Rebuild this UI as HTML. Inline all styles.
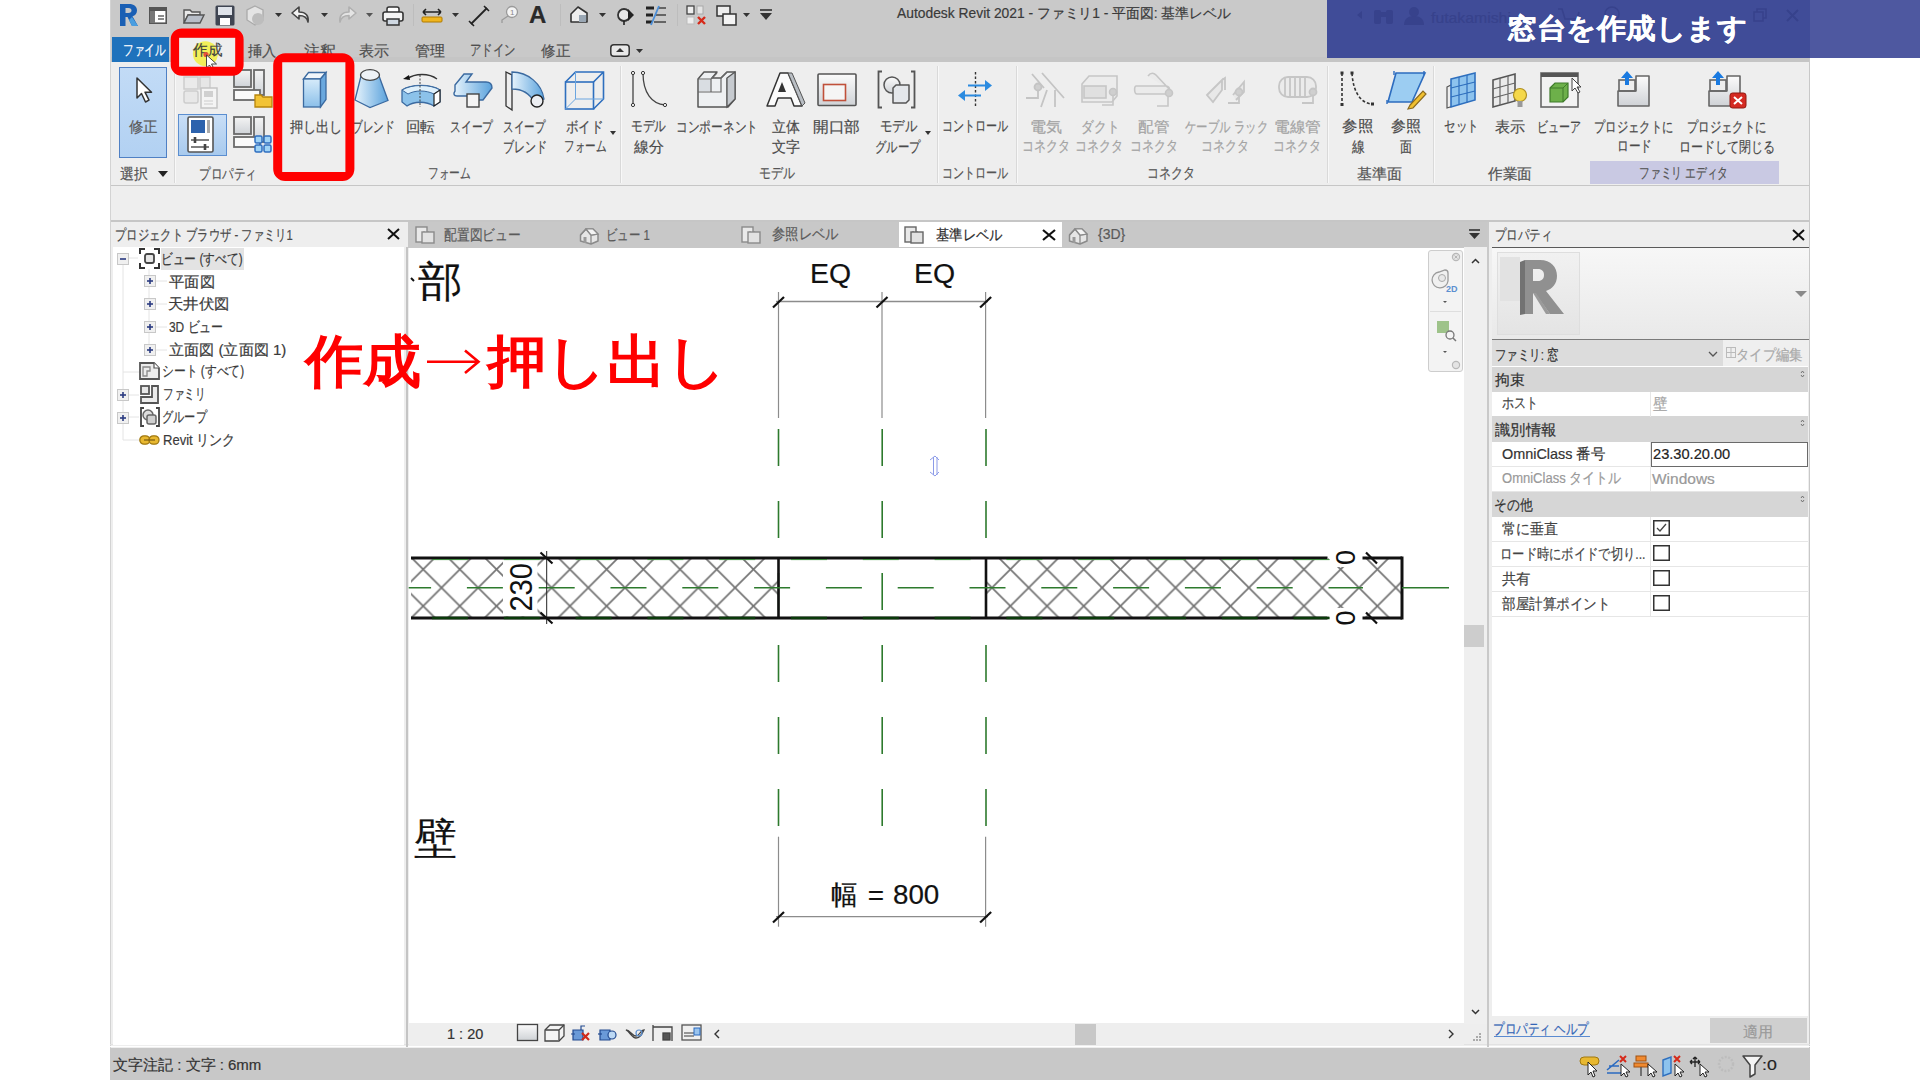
<!DOCTYPE html>
<html><head><meta charset="utf-8">
<style>
*{box-sizing:border-box;margin:0;padding:0}
html,body{width:1920px;height:1080px;overflow:hidden;background:#fff;font-family:"Liberation Sans",sans-serif;color:#333}
.a{position:absolute;white-space:nowrap;-webkit-text-stroke:0.2px currentColor}
.bg{position:absolute}
svg{position:absolute;overflow:visible}
</style></head><body>
<div class="bg" style="left:110px;top:0px;width:1700px;height:1080px;background:#eeeeee;"></div>
<div class="bg" style="left:110px;top:0px;width:1700px;height:62px;background:#c9c9c9;"></div>
<div class="bg" style="left:110px;top:57px;width:1700px;height:5px;background:#c5c5c5;"></div>
<div class="bg" style="left:110px;top:185px;width:1700px;height:1px;background:#c6c6c6;"></div>
<div class="bg" style="left:110px;top:220px;width:1700px;height:2px;background:#c6c6c6;"></div>
<div class="bg" style="left:110px;top:0px;width:1px;height:1080px;background:#d3d3d3;"></div>
<div class="bg" style="left:1809px;top:0px;width:1px;height:1080px;background:#c8c8c8;"></div>
<div class="bg" style="left:110px;top:1044px;width:1700px;height:1px;background:#e2e2e2;"></div>
<div class="bg" style="left:110px;top:1045.5px;width:1700px;height:1.5px;background:#ffffff;"></div>
<div class="bg" style="left:110px;top:1047.5px;width:1700px;height:32.5px;background:#c8c8c8;"></div>
<svg style="left:119px;top:3px" width="20" height="24" viewBox="0 0 20 24"><path d="M1 1h9c5 0 8 2.5 8 6.5 0 3-1.8 5-4.5 5.8L19 23h-6l-4.5-9H6.5v9H1z M6.5 5v5h3c2 0 3-1 3-2.5S11.5 5 9.5 5z" fill="#1a5fb4" fill-rule="evenodd"/><path d="M13 14l6 9h-6l-3-6z" fill="#4a9ee0"/></svg>
<svg style="left:149px;top:7px" width="18" height="17" viewBox="0 0 18 17"><rect x="0.8" y="0.8" width="16.4" height="15.4" fill="#fff" stroke="#555" stroke-width="1.6"/><rect x="1" y="1" width="16" height="3" fill="#555"/><rect x="1" y="4" width="5" height="12" fill="#777"/><path d="M9 9h6M9 12h6" stroke="#666" stroke-width="1.4"/></svg>
<svg style="left:183px;top:8px" width="22" height="16" viewBox="0 0 22 16"><path d="M1 2h6l2 2h8v3H5L1 15z" fill="#e9e9e9" stroke="#555" stroke-width="1.4"/><path d="M1 15l4-8h16l-4 8z" fill="#b8bec8" stroke="#555" stroke-width="1.4"/></svg>
<svg style="left:215px;top:5px" width="20" height="21" viewBox="0 0 20 21"><rect x="0.5" y="0.5" width="19" height="20" rx="1.5" fill="#3f4552"/><rect x="3" y="2" width="14" height="8" fill="#dfe3ea"/><rect x="5" y="13" width="10" height="7" fill="#fff"/></svg>
<svg style="left:245px;top:5px" width="20" height="21" viewBox="0 0 20 21"><path d="M10 1l8 4v10l-8 5-8-5V5z" fill="#e4e4e4" stroke="#aaa" stroke-width="1.3"/><circle cx="13" cy="14" r="6" fill="#bdbdbd"/></svg>
<svg style="left:275px;top:13px" width="7" height="4" viewBox="0 0 7 4"><path d="M0 0h7L3.5 4z" fill="#333"/></svg>
<svg style="left:291px;top:6px" width="20" height="17" viewBox="0 0 20 17"><path d="M8 1L1 7l7 6V9.5c5 0 8 1.5 9 6.5 1-6-2-10-9-10z" fill="#f2f2f2" stroke="#444" stroke-width="1.6" stroke-linejoin="round"/></svg>
<svg style="left:321px;top:13px" width="7" height="4" viewBox="0 0 7 4"><path d="M0 0h7L3.5 4z" fill="#333"/></svg>
<svg style="left:337px;top:6px" width="20" height="17" viewBox="0 0 20 17"><path d="M12 1l7 6-7 6V9.5c-5 0-8 1.5-9 6.5-1-6 2-10 9-10z" fill="#e4e4e4" stroke="#b0b0b0" stroke-width="1.6" stroke-linejoin="round"/></svg>
<svg style="left:366px;top:13px" width="7" height="4" viewBox="0 0 7 4"><path d="M0 0h7L3.5 4z" fill="#555"/></svg>
<svg style="left:382px;top:6px" width="22" height="20" viewBox="0 0 22 20"><rect x="5" y="1" width="12" height="6" rx="2" fill="#fff" stroke="#333" stroke-width="1.5"/><rect x="1" y="6" width="20" height="9" rx="2" fill="#f4f4f4" stroke="#333" stroke-width="1.6"/><rect x="5" y="13" width="12" height="6" fill="#cfd8e2" stroke="#333" stroke-width="1.5"/></svg>
<div class="bg" style="left:413px;top:4px;width:1px;height:22px;background:#bdbdbd"></div>
<svg style="left:421px;top:8px" width="22" height="15" viewBox="0 0 22 15"><path d="M2 4h18M2 4l3-3M2 4l3 3M20 4l-3-3M20 4l-3 3" stroke="#222" stroke-width="1.6" fill="none"/><rect x="1" y="9" width="20" height="5" rx="1" fill="#f0b51e" stroke="#b07a00" stroke-width="1"/></svg>
<svg style="left:452px;top:13px" width="7" height="4" viewBox="0 0 7 4"><path d="M0 0h7L3.5 4z" fill="#333"/></svg>
<svg style="left:468px;top:5px" width="22" height="22" viewBox="0 0 22 22"><path d="M3 19L19 3" stroke="#222" stroke-width="1.8"/><path d="M1 16l5 5M16 1l5 5" stroke="#222" stroke-width="1.6"/></svg>
<svg style="left:499px;top:5px" width="20" height="20" viewBox="0 0 20 20"><circle cx="13" cy="7" r="5.5" fill="#f4f4f4" stroke="#9a9a9a" stroke-width="1.3"/><path d="M9 11l-6 4v3" stroke="#9a9a9a" stroke-width="1.3" fill="none"/><text x="11" y="10" font-size="8" fill="#888" font-family="Liberation Sans">1</text></svg>
<div class="a" style="left:529px;top:1px;font-size:24px;font-weight:bold;color:#2a2a2a;line-height:28px">A</div>
<div class="bg" style="left:560px;top:4px;width:1px;height:22px;background:#bdbdbd"></div>
<svg style="left:569px;top:6px" width="20" height="18" viewBox="0 0 20 18"><path d="M2 8L9 1l9 6v9H2z" fill="#eee" stroke="#333" stroke-width="1.6" stroke-linejoin="round"/><rect x="10" y="9" width="7" height="7" fill="#9aa7b4"/></svg>
<svg style="left:599px;top:13px" width="7" height="4" viewBox="0 0 7 4"><path d="M0 0h7L3.5 4z" fill="#333"/></svg>
<svg style="left:616px;top:5px" width="19" height="20" viewBox="0 0 19 20"><circle cx="8" cy="10" r="6" fill="#e8e8e8" stroke="#333" stroke-width="1.8"/><path d="M12 4l6 6-6 6z" fill="#222"/><path d="M8 16v4" stroke="#222" stroke-width="1.6"/></svg>
<svg style="left:645px;top:5px" width="22" height="20" viewBox="0 0 22 20"><path d="M1 3h8M1 10h7M1 17h6" stroke="#222" stroke-width="3"/><path d="M13 3h8M11 10h10M9 17h12" stroke="#444" stroke-width="1.3"/><path d="M14 1L6 20" stroke="#4a8ed8" stroke-width="1.8"/></svg>
<div class="bg" style="left:677px;top:4px;width:1px;height:22px;background:#bdbdbd"></div>
<svg style="left:686px;top:5px" width="22" height="21" viewBox="0 0 22 21"><rect x="1" y="1" width="7" height="8" fill="#eee" stroke="#444" stroke-width="1.3"/><rect x="11" y="1" width="6" height="8" fill="#e4e4e4" stroke="#aaa" stroke-width="1"/><rect x="1" y="12" width="7" height="7" fill="#eee" stroke="#bbb" stroke-width="1"/><path d="M12 12l7 7M19 12l-7 7" stroke="#d62a1a" stroke-width="2.4"/></svg>
<svg style="left:716px;top:5px" width="21" height="21" viewBox="0 0 21 21"><rect x="1" y="1" width="13" height="10" fill="#eee" stroke="#333" stroke-width="1.5"/><rect x="7" y="9" width="13" height="11" fill="#f4f4f4" stroke="#333" stroke-width="1.5"/></svg>
<svg style="left:743px;top:13px" width="7" height="4" viewBox="0 0 7 4"><path d="M0 0h7L3.5 4z" fill="#333"/></svg>
<svg style="left:759px;top:9px" width="14" height="12" viewBox="0 0 14 12"><path d="M1 1h12" stroke="#333" stroke-width="1.6"/><path d="M1 4h12l-6 7z" fill="#333"/></svg>

<div class="a" style="left:897.0px;top:4.5px;font-size:14px;line-height:17px;color:#3a3a3a;font-weight:normal;transform:scaleX(0.9882);transform-origin:0 0;">Autodesk Revit 2021 - ファミリ1 - 平面図: 基準レベル</div>
<div class="bg" style="left:112px;top:37px;width:57px;height:25px;background:#1f72bc;"></div>
<div class="a" style="left:122.8px;top:40.5px;font-size:15px;line-height:18px;color:#ffffff;font-weight:normal;transform:scaleX(0.7119);transform-origin:0 0;">ファイル</div>
<div class="bg" style="left:178px;top:38px;width:60px;height:24px;background:#eeeeee;"></div>
<svg style="left:0;top:0" width="400" height="80" viewBox="0 0 400 80"><circle cx="205.4" cy="53.7" r="12.5" fill="#f2ee40" fill-opacity="0.85"/></svg>
<div class="a" style="left:193.0px;top:41.0px;font-size:15px;line-height:18px;color:#3f3f3f;font-weight:normal;transform:scaleX(0.9667);transform-origin:0 0;">作成</div>
<div class="a" style="left:248.3px;top:42.0px;font-size:15px;line-height:18px;color:#4f4f4f;font-weight:normal;transform:scaleX(0.9552);transform-origin:0 0;">挿入</div>
<div class="a" style="left:303.5px;top:42.0px;font-size:15px;line-height:18px;color:#4f4f4f;font-weight:normal;transform:scaleX(1.0517);transform-origin:0 0;">注釈</div>
<div class="a" style="left:359.0px;top:41.5px;font-size:15px;line-height:18px;color:#4f4f4f;font-weight:normal;">表示</div>
<div class="a" style="left:415.0px;top:41.5px;font-size:15px;line-height:18px;color:#4f4f4f;font-weight:normal;">管理</div>
<div class="a" style="left:470.2px;top:41.0px;font-size:15px;line-height:18px;color:#4f4f4f;font-weight:normal;transform:scaleX(0.7586);transform-origin:0 0;">アドイン</div>
<div class="a" style="left:541.0px;top:41.5px;font-size:15px;line-height:18px;color:#4f4f4f;font-weight:normal;transform:scaleX(0.9667);transform-origin:0 0;">修正</div>
<svg style="left:610px;top:44px" width="20" height="13" viewBox="0 0 20 13"><rect x="0.8" y="0.8" width="18.4" height="11.4" rx="3" fill="#e8e8e8" stroke="#333" stroke-width="1.5"/><path d="M6 8h8L10 4z" fill="#333"/></svg>
<svg style="left:636px;top:49px" width="7" height="4" viewBox="0 0 7 4"><path d="M0 0h7L3.5 4z" fill="#333"/></svg>
<div class="bg" style="left:174px;top:66px;width:1px;height:117px;background:#d9d9d9;"></div>
<div class="bg" style="left:175px;top:66px;width:1px;height:117px;background:#f8f8f8;"></div>
<div class="bg" style="left:620px;top:66px;width:1px;height:117px;background:#d9d9d9;"></div>
<div class="bg" style="left:621px;top:66px;width:1px;height:117px;background:#f8f8f8;"></div>
<div class="bg" style="left:937px;top:66px;width:1px;height:117px;background:#d9d9d9;"></div>
<div class="bg" style="left:938px;top:66px;width:1px;height:117px;background:#f8f8f8;"></div>
<div class="bg" style="left:1016px;top:66px;width:1px;height:117px;background:#d9d9d9;"></div>
<div class="bg" style="left:1017px;top:66px;width:1px;height:117px;background:#f8f8f8;"></div>
<div class="bg" style="left:1327px;top:66px;width:1px;height:117px;background:#d9d9d9;"></div>
<div class="bg" style="left:1328px;top:66px;width:1px;height:117px;background:#f8f8f8;"></div>
<div class="bg" style="left:1433px;top:66px;width:1px;height:117px;background:#d9d9d9;"></div>
<div class="bg" style="left:1434px;top:66px;width:1px;height:117px;background:#f8f8f8;"></div>
<div class="bg" style="left:118.5px;top:66.5px;width:48.5px;height:91.5px;background:linear-gradient(#c2dbf6,#b2d1f2);border:1.5px solid #4f80c4"></div>
<svg style="left:135px;top:77px" width="17" height="27" viewBox="0 0 17 27"><path d="M2 1v20l4.5-4.5 4 8.5 3.5-1.8-4-8h6.5z" fill="#fff" stroke="#333" stroke-width="1.5" stroke-linejoin="round"/></svg>
<div class="bg" style="left:178px;top:114px;width:49px;height:42px;background:linear-gradient(#c9def6,#a8caee);border:1px solid #5b8ed0"></div>
<svg style="left:187px;top:116px" width="27" height="37" viewBox="0 0 27 37"><rect x="1" y="1" width="25" height="35" rx="1.5" fill="#fff" stroke="#555" stroke-width="1.6"/><rect x="4" y="4" width="14" height="13" fill="#2c62ad"/><rect x="20" y="4" width="3" height="13" fill="#aaa"/><path d="M4 24h18M4 31h18" stroke="#555" stroke-width="1.6"/><path d="M8 21v6M18 28v6" stroke="#444" stroke-width="2.6"/></svg>
<svg style="left:183px;top:76px" width="38" height="33" viewBox="0 0 38 33"><rect x="1" y="1" width="14" height="12" fill="#eaeaea" stroke="#cdcdcd" stroke-width="1.5"/><rect x="17" y="1" width="10" height="12" fill="#e6e6e6" stroke="#cdcdcd" stroke-width="1.5"/><rect x="1" y="15" width="14" height="12" rx="2" fill="#e8e8e8" stroke="#cdcdcd" stroke-width="1.5"/><rect x="18" y="12" width="16" height="20" fill="#f4f4f4" stroke="#c4c4c4" stroke-width="1.5"/><rect x="21" y="15" width="9" height="6" fill="#d0d0d0"/><path d="M21 25h9M21 28h9" stroke="#ccc" stroke-width="1"/></svg>
<svg style="left:233px;top:69px" width="40" height="39" viewBox="0 0 40 39"><rect x="1" y="1" width="17" height="17" fill="url(#gg)" stroke="#6a6a6a" stroke-width="1.8"/><rect x="21" y="1" width="10" height="25" fill="url(#gg)" stroke="#6a6a6a" stroke-width="1.8"/><rect x="1" y="21" width="26" height="10" fill="#fafafa" stroke="#6a6a6a" stroke-width="1.8"/><path d="M22 26h6l2 2h9v10H22z" fill="#f2c335" stroke="#b8860b" stroke-width="1.3"/></svg>
<svg style="left:233px;top:116px" width="40" height="38" viewBox="0 0 40 38"><defs><linearGradient id="gg" x1="0" y1="0" x2="0" y2="1"><stop offset="0" stop-color="#f4f4f4"/><stop offset="1" stop-color="#cfd3d8"/></linearGradient></defs><rect x="1" y="1" width="17" height="17" fill="url(#gg)" stroke="#6a6a6a" stroke-width="1.8"/><rect x="21" y="1" width="10" height="25" fill="url(#gg)" stroke="#6a6a6a" stroke-width="1.8"/><rect x="1" y="21" width="26" height="10" fill="#fafafa" stroke="#6a6a6a" stroke-width="1.8"/><g fill="#9fd3f6" stroke="#2f6fc0" stroke-width="1.5"><rect x="22" y="20" width="7" height="7" rx="1.5"/><rect x="31" y="20" width="7" height="7" rx="1.5"/><rect x="22" y="29" width="7" height="7" rx="1.5"/><rect x="31" y="29" width="7" height="7" rx="1.5"/></g></svg>
<svg style="left:0;top:0" width="1920" height="200" viewBox="0 0 1920 200"><defs>
<linearGradient id="bl" x1="0" y1="0" x2="0" y2="1"><stop offset="0" stop-color="#d6ebfa"/><stop offset="1" stop-color="#8cc0ea"/></linearGradient>
<linearGradient id="bl2" x1="0" y1="0" x2="1" y2="0"><stop offset="0" stop-color="#e6f3fc"/><stop offset="1" stop-color="#5aa2dc"/></linearGradient>
<linearGradient id="gr" x1="0" y1="0" x2="0" y2="1"><stop offset="0" stop-color="#fbfbfb"/><stop offset="1" stop-color="#cfd2d6"/></linearGradient>
</defs><path d="M303.5 79l5-6.5h17.5l-5.5 6.5z" fill="#f2f6fa" stroke="#3b6aa0" stroke-width="1.3"/><rect x="303.5" y="79" width="17" height="28" fill="url(#bl)" stroke="#3b6aa0" stroke-width="1.3"/><path d="M320.5 79l5.5-6.5v27l-5.5 7.5z" fill="#6aa8de" stroke="#3b6aa0" stroke-width="1.3"/><path d="M361 76l-6 24 15 7.5 18-7L379 76z" fill="url(#bl2)" stroke="#3b6aa0" stroke-width="1.3"/><ellipse cx="370" cy="75" rx="9.5" ry="5.3" fill="#eef2f6" stroke="#444" stroke-width="1.3"/><path d="M407 79c8-6 22-6 30 0" fill="none" stroke="#333" stroke-width="1.3"/><path d="M403 79l6-4 1 5z" fill="#111"/><path d="M402 90c10-6 28-6 38 0v12l-6 4c-8-5-20-5-27 0l-5-4z" fill="#8cc2ea" stroke="#3b6aa0" stroke-width="1.3"/><path d="M402 90c10-6 28-6 38 0l-6 4c-8-4-19-4-26 0z" fill="#dff0fb" stroke="#3b6aa0" stroke-width="1"/><path d="M434 94l6-4v12l-6 4z" fill="#fff" stroke="#222" stroke-width="1.2"/><path d="M420 75v32" stroke="#333" stroke-width="0.9" stroke-dasharray="2 1.5"/><path d="M455 85l9-11h8l-6 8h20c5 0 6 3 6 6l-9 12h-10v-4h-16c-3 0-4-2-2-5z" fill="url(#bl2)" stroke="#3b6aa0" stroke-width="1.4"/><rect x="467" y="94" width="12" height="13" fill="#f4f4f4" stroke="#444" stroke-width="1.4"/><path d="M506 72l6 3v35l-6-4z" fill="#eee" stroke="#333" stroke-width="1.3"/><path d="M512 72c16 0 30 12 32 27l-10 3c-4-8-12-13-22-13z" fill="url(#bl2)" stroke="#3b6aa0" stroke-width="1.3"/><circle cx="537" cy="101" r="6" fill="#eceef2" stroke="#222" stroke-width="1.4"/><g fill="none" stroke="#2e6fbe" stroke-width="1.6"><rect x="565.5" y="82" width="28" height="27"/><path d="M565.5 82l10-10h28v27l-10 10M593.5 82l10-10"/></g><g fill="none" stroke="#6aa5e0" stroke-width="1"><path d="M575.5 72v27h28M575.5 99l-10 10"/></g><path d="M633 73v32" stroke="#444" stroke-width="1.3"/><circle cx="633" cy="73" r="1.6" fill="#fff" stroke="#333"/><circle cx="633" cy="105" r="1.6" fill="#fff" stroke="#333"/><path d="M643 73c0 20 9 31 22 32" fill="none" stroke="#444" stroke-width="1.3"/><circle cx="643" cy="73" r="1.6" fill="#fff" stroke="#333"/><circle cx="665" cy="105" r="1.6" fill="#fff" stroke="#333"/><path d="M698 79l6-7h13l-5 6h9l6-6h8v27l-7 8h-30z" fill="#eef0f2" stroke="#555" stroke-width="1.5" stroke-linejoin="round"/><path d="M698 79h13v13h-13M711 79l6-6M721 78v14h-23M721 78l6-6M727 78v29" fill="none" stroke="#666" stroke-width="1.2"/><path d="M727 78l8-6v27l-8 8z" fill="#c6cacf" stroke="#555" stroke-width="1.2"/><rect x="699" y="80" width="11" height="11" fill="#d9dde2"/><path d="M767 106l13-33h8l14 33h-8l-3-8h-13l-3 8z" fill="#fbfbfb" stroke="#333" stroke-width="1.5" stroke-linejoin="round"/><path d="M778 92h8l-4-10z" fill="#333"/><path d="M788 73l4 0 13 30-3 3z" fill="#b9bec4" stroke="#555" stroke-width="1"/><rect x="818" y="74" width="38" height="31.5" rx="1" fill="url(#gr)" stroke="#555" stroke-width="1.6"/><rect x="823.5" y="84.5" width="22" height="16" fill="#f5f5f5" stroke="#c0503a" stroke-width="1.6"/><path d="M882 71.5h-3.5v36h3.5M911 71.5h3.5v36H911" fill="none" stroke="#555" stroke-width="1.8"/><circle cx="892" cy="85" r="8" fill="url(#gr)" stroke="#555" stroke-width="1.5"/><path d="M893 88l3-3h13v15l-3 3h-13z" fill="#e4e7eb" stroke="#555" stroke-width="1.5" stroke-linejoin="round"/><path d="M975.5 72v36" stroke="#333" stroke-width="1.4" stroke-dasharray="2.5 2"/><path d="M968 85.5h19" stroke="#2b8be0" stroke-width="2"/><path d="M985 80l7 5.5-7 5.5z" fill="#2b8be0"/><path d="M963 95.5h18" stroke="#2b8be0" stroke-width="2"/><path d="M965 90l-7 5.5 7 5.5z" fill="#2b8be0"/><g fill="none" stroke="#c4c4c4" stroke-width="1.8"><path d="M1032 74l12 14M1042 73l22 25M1047 90l-6 17M1055 90v17"/><circle cx="1038" cy="87" r="3.5" fill="#cfcfcf"/><path d="M1038 91v7h-12"/></g><g fill="none" stroke="#c6c6c6" stroke-width="1.6"><path d="M1082 84l7-8h28v20l-5 6h-30z" fill="#ececec"/><rect x="1084" y="86" width="22" height="12" fill="#e0e0e0"/><circle cx="1113" cy="92" r="3.5" fill="#cfcfcf"/><path d="M1113 96v9h-11"/></g><g fill="none" stroke="#c6c6c6" stroke-width="1.6"><path d="M1148 76c3-4 6-3 8-1l14 15M1136 86h30c3 0 4 3 4 6v2h-33c-3 0-3-8-1-8z" fill="#ebebeb"/><circle cx="1169" cy="93" r="3.5" fill="#cfcfcf"/><path d="M1168 97v9h-11"/></g><g fill="none" stroke="#c6c6c6" stroke-width="1.8"><path d="M1207 95l15-15v10l-9 12zM1222 80l3-2v12M1233 95l11-13v10l-8 8" fill="#e8e8e8"/><circle cx="1239" cy="92" r="3.5" fill="#cfcfcf"/><path d="M1239 96v7h-11"/></g><g fill="none" stroke="#c6c6c6" stroke-width="1.8"><rect x="1279" y="77" width="37" height="20" rx="9" fill="#ebebeb"/><path d="M1285 78v18M1290 78v18M1295 78v18M1300 78v18M1305 78v18"/><circle cx="1313" cy="92" r="3.5" fill="#cfcfcf"/><path d="M1313 96v7h-11"/></g><path d="M1342 73v32" stroke="#333" stroke-width="1.6" stroke-dasharray="3 2"/><rect x="1340.5" y="71.5" width="3" height="3" fill="#333"/><rect x="1340.5" y="103" width="3" height="3" fill="#333"/><path d="M1352 73c1 18 8 30 20 31" fill="none" stroke="#333" stroke-width="1.6" stroke-dasharray="3 2"/><rect x="1350.5" y="71.5" width="3" height="3" fill="#333"/><rect x="1371" y="102.5" width="3" height="3" fill="#333"/><path d="M1396 73h29l-13 29h-24z" fill="#9ccdf2" stroke="#2c6cbf" stroke-width="1.6"/><path d="M1394 71v4M1424 71v4M1387 100v4" stroke="#2c6cbf" stroke-width="1.4"/><path d="M1410 105l13-14 3 3-13 14-5 1z" fill="#f0c030" stroke="#8a6a20" stroke-width="1.2"/><path d="M1447 87l6-3v22l-6 2z" fill="#eee" stroke="#555" stroke-width="1.2"/><path d="M1451 79l24-6v27l-24 7z" fill="#8dc3ee" stroke="#2e6fbe" stroke-width="1.6"/><path d="M1459 77v28M1467 75v28M1451 88l24-6M1451 97l24-6" stroke="#2e6fbe" stroke-width="1.2"/><path d="M1493 80l22-6v27l-22 6z" fill="#eaeaea" stroke="#555" stroke-width="1.6"/><path d="M1500 78v27M1508 76v27M1493 89l22-6M1493 98l22-6" stroke="#666" stroke-width="1.2"/><circle cx="1520" cy="95" r="6.5" fill="#f5d84a" stroke="#b09020" stroke-width="1.2"/><rect x="1517.5" y="101" width="5" height="6" fill="#999"/><rect x="1541" y="73" width="37" height="34" fill="#f2f2f2" stroke="#666" stroke-width="1.6"/><rect x="1541" y="73" width="37" height="4" fill="#555"/><path d="M1550 88l5-5h13v14l-5 5h-13z" fill="#6db04a" stroke="#3e7a2a" stroke-width="1.2"/><path d="M1550 88h13v14M1563 88l5-5" stroke="#3e7a2a" stroke-width="1" fill="none"/><path d="M1572 78v13l3-3 3 5 2-1-3-5h4z" fill="#fff" stroke="#444" stroke-width="1"/><path d="M1636 76h13v30h-31V91h18z" fill="url(#gr)" stroke="#666" stroke-width="1.6" stroke-linejoin="round"/><rect x="1619" y="80" width="16" height="11" fill="none" stroke="#666" stroke-width="1.6"/><path d="M1627 71l-6 7h4v7h4v-7h4z" fill="#1a7ae0"/><path d="M1727 76h13v30h-31V91h18z" fill="url(#gr)" stroke="#666" stroke-width="1.6" stroke-linejoin="round"/><rect x="1710" y="80" width="16" height="11" fill="none" stroke="#666" stroke-width="1.6"/><path d="M1718 71l-6 7h4v7h4v-7h4z" fill="#1a7ae0"/><rect x="1730" y="93" width="16" height="15" rx="2.5" fill="#d42a22" stroke="#901810" stroke-width="1"/><path d="M1734 97l8 7M1742 97l-8 7" stroke="#fff" stroke-width="2"/></svg>
<div class="a" style="left:128.8px;top:117.5px;font-size:15px;line-height:18px;color:#5a5a5a;font-weight:normal;transform:scaleX(0.9617);transform-origin:0 0;">修正</div>
<div class="a" style="left:289.7px;top:117.5px;font-size:15px;line-height:18px;color:#4a4a4a;font-weight:normal;transform:scaleX(0.8759);transform-origin:0 0;">押し出し</div>
<div class="a" style="left:351.8px;top:117.5px;font-size:15px;line-height:18px;color:#4a4a4a;font-weight:normal;transform:scaleX(0.7105);transform-origin:0 0;">ブレンド</div>
<div class="a" style="left:406.0px;top:117.5px;font-size:15px;line-height:18px;color:#4a4a4a;font-weight:normal;transform:scaleX(0.9655);transform-origin:0 0;">回転</div>
<div class="a" style="left:450.3px;top:118.0px;font-size:15px;line-height:18px;color:#4a4a4a;font-weight:normal;transform:scaleX(0.7167);transform-origin:0 0;">スイープ</div>
<div class="a" style="left:503.3px;top:118.0px;font-size:15px;line-height:18px;color:#4a4a4a;font-weight:normal;transform:scaleX(0.7000);transform-origin:0 0;">スイープ</div>
<div class="a" style="left:503.3px;top:137.5px;font-size:15px;line-height:18px;color:#4a4a4a;font-weight:normal;transform:scaleX(0.7368);transform-origin:0 0;">ブレンド</div>
<div class="a" style="left:566.2px;top:117.5px;font-size:15px;line-height:18px;color:#4a4a4a;font-weight:normal;transform:scaleX(0.8333);transform-origin:0 0;">ボイド</div>
<div class="a" style="left:564.3px;top:136.5px;font-size:15px;line-height:18px;color:#4a4a4a;font-weight:normal;transform:scaleX(0.7069);transform-origin:0 0;">フォーム</div>
<div class="a" style="left:630.9px;top:117.0px;font-size:15px;line-height:18px;color:#4a4a4a;font-weight:normal;transform:scaleX(0.7795);transform-origin:0 0;">モデル</div>
<div class="a" style="left:634.0px;top:137.5px;font-size:15px;line-height:18px;color:#4a4a4a;font-weight:normal;">線分</div>
<div class="a" style="left:675.9px;top:117.5px;font-size:15px;line-height:18px;color:#4a4a4a;font-weight:normal;transform:scaleX(0.7810);transform-origin:0 0;">コンポーネント</div>
<div class="a" style="left:772.0px;top:118.0px;font-size:15px;line-height:18px;color:#4a4a4a;font-weight:normal;transform:scaleX(0.9333);transform-origin:0 0;">立体</div>
<div class="a" style="left:772.0px;top:138.0px;font-size:15px;line-height:18px;color:#4a4a4a;font-weight:normal;transform:scaleX(0.9333);transform-origin:0 0;">文字</div>
<div class="a" style="left:813.0px;top:118.0px;font-size:15px;line-height:18px;color:#4a4a4a;font-weight:normal;transform:scaleX(1.0465);transform-origin:0 0;">開口部</div>
<div class="a" style="left:879.8px;top:117.0px;font-size:15px;line-height:18px;color:#4a4a4a;font-weight:normal;transform:scaleX(0.8273);transform-origin:0 0;">モデル</div>
<div class="a" style="left:874.5px;top:138.0px;font-size:15px;line-height:18px;color:#4a4a4a;font-weight:normal;transform:scaleX(0.7627);transform-origin:0 0;">グループ</div>
<div class="a" style="left:941.5px;top:117.0px;font-size:15px;line-height:18px;color:#4a4a4a;font-weight:normal;transform:scaleX(0.7386);transform-origin:0 0;">コントロール</div>
<div class="a" style="left:1029.9px;top:117.5px;font-size:15px;line-height:18px;color:#a3a3a3;font-weight:normal;transform:scaleX(1.0690);transform-origin:0 0;">電気</div>
<div class="a" style="left:1022.4px;top:137.0px;font-size:15px;line-height:18px;color:#a3a3a3;font-weight:normal;transform:scaleX(0.8036);transform-origin:0 0;">コネクタ</div>
<div class="a" style="left:1081.3px;top:117.5px;font-size:15px;line-height:18px;color:#a3a3a3;font-weight:normal;transform:scaleX(0.8500);transform-origin:0 0;">ダクト</div>
<div class="a" style="left:1075.4px;top:137.0px;font-size:15px;line-height:18px;color:#a3a3a3;font-weight:normal;transform:scaleX(0.8036);transform-origin:0 0;">コネクタ</div>
<div class="a" style="left:1138.0px;top:117.5px;font-size:15px;line-height:18px;color:#a3a3a3;font-weight:normal;transform:scaleX(1.0357);transform-origin:0 0;">配管</div>
<div class="a" style="left:1130.4px;top:137.0px;font-size:15px;line-height:18px;color:#a3a3a3;font-weight:normal;transform:scaleX(0.8036);transform-origin:0 0;">コネクタ</div>
<div class="a" style="left:1184.7px;top:117.5px;font-size:15px;line-height:18px;color:#a3a3a3;font-weight:normal;transform:scaleX(0.7598);transform-origin:0 0;">ケーブル ラック</div>
<div class="a" style="left:1201.4px;top:137.0px;font-size:15px;line-height:18px;color:#a3a3a3;font-weight:normal;transform:scaleX(0.8036);transform-origin:0 0;">コネクタ</div>
<div class="a" style="left:1274.0px;top:117.5px;font-size:15px;line-height:18px;color:#a3a3a3;font-weight:normal;transform:scaleX(1.0465);transform-origin:0 0;">電線管</div>
<div class="a" style="left:1273.4px;top:137.0px;font-size:15px;line-height:18px;color:#a3a3a3;font-weight:normal;transform:scaleX(0.8036);transform-origin:0 0;">コネクタ</div>
<div class="a" style="left:1342.0px;top:117.0px;font-size:15px;line-height:18px;color:#4a4a4a;font-weight:normal;transform:scaleX(1.0345);transform-origin:0 0;">参照</div>
<div class="a" style="left:1352.0px;top:137.5px;font-size:15px;line-height:18px;color:#4a4a4a;font-weight:normal;transform:scaleX(0.8571);transform-origin:0 0;">線</div>
<div class="a" style="left:1391.0px;top:117.0px;font-size:15px;line-height:18px;color:#4a4a4a;font-weight:normal;">参照</div>
<div class="a" style="left:1400.0px;top:137.5px;font-size:15px;line-height:18px;color:#4a4a4a;font-weight:normal;transform:scaleX(0.8000);transform-origin:0 0;">面</div>
<div class="a" style="left:1444.2px;top:117.0px;font-size:15px;line-height:18px;color:#4a4a4a;font-weight:normal;transform:scaleX(0.7683);transform-origin:0 0;">セット</div>
<div class="a" style="left:1495.0px;top:117.5px;font-size:15px;line-height:18px;color:#4a4a4a;font-weight:normal;">表示</div>
<div class="a" style="left:1536.8px;top:117.5px;font-size:15px;line-height:18px;color:#4a4a4a;font-weight:normal;transform:scaleX(0.7321);transform-origin:0 0;">ビューア</div>
<div class="a" style="left:1594.2px;top:118.0px;font-size:15px;line-height:18px;color:#4a4a4a;font-weight:normal;transform:scaleX(0.7534);transform-origin:0 0;">プロジェクトに</div>
<div class="a" style="left:1616.7px;top:137.0px;font-size:15px;line-height:18px;color:#4a4a4a;font-weight:normal;transform:scaleX(0.7750);transform-origin:0 0;">ロード</div>
<div class="a" style="left:1687.2px;top:118.0px;font-size:15px;line-height:18px;color:#4a4a4a;font-weight:normal;transform:scaleX(0.7573);transform-origin:0 0;">プロジェクトに</div>
<div class="a" style="left:1679.1px;top:137.5px;font-size:15px;line-height:18px;color:#4a4a4a;font-weight:normal;transform:scaleX(0.8009);transform-origin:0 0;">ロードして閉じる</div>
<svg style="left:610px;top:131px" width="6" height="4" viewBox="0 0 6 4"><path d="M0 0h6L3 4z" fill="#333"/></svg>
<svg style="left:925px;top:131px" width="6" height="4" viewBox="0 0 6 4"><path d="M0 0h6L3 4z" fill="#333"/></svg>
<div class="bg" style="left:1590px;top:161px;width:188.5px;height:23px;background:#c9c9e3;"></div>
<div class="a" style="left:120.0px;top:164.5px;font-size:15px;line-height:18px;color:#555555;font-weight:normal;transform:scaleX(0.9333);transform-origin:0 0;">選択</div>
<div class="a" style="left:199.0px;top:165.0px;font-size:15px;line-height:18px;color:#555555;font-weight:normal;transform:scaleX(0.7704);transform-origin:0 0;">プロパティ</div>
<div class="a" style="left:428.3px;top:163.5px;font-size:15px;line-height:18px;color:#555555;font-weight:normal;transform:scaleX(0.7155);transform-origin:0 0;">フォーム</div>
<div class="a" style="left:759.2px;top:164.0px;font-size:15px;line-height:18px;color:#555555;font-weight:normal;transform:scaleX(0.7955);transform-origin:0 0;">モデル</div>
<div class="a" style="left:941.5px;top:164.0px;font-size:15px;line-height:18px;color:#555555;font-weight:normal;transform:scaleX(0.7386);transform-origin:0 0;">コントロール</div>
<div class="a" style="left:1147.4px;top:164.0px;font-size:15px;line-height:18px;color:#555555;font-weight:normal;transform:scaleX(0.8036);transform-origin:0 0;">コネクタ</div>
<div class="a" style="left:1357.0px;top:164.5px;font-size:15px;line-height:18px;color:#555555;font-weight:normal;">基準面</div>
<div class="a" style="left:1488.0px;top:164.5px;font-size:15px;line-height:18px;color:#555555;font-weight:normal;transform:scaleX(0.9778);transform-origin:0 0;">作業面</div>
<div class="a" style="left:1639.3px;top:164.0px;font-size:15px;line-height:18px;color:#555555;font-weight:normal;transform:scaleX(0.7190);transform-origin:0 0;">ファミリ エディタ</div>
<svg style="left:158px;top:171px" width="10" height="6" viewBox="0 0 10 6"><path d="M0 0h10L5 6z" fill="#222"/></svg>
<div class="bg" style="left:111px;top:222px;width:296px;height:25px;background:#eeeeee;"></div>
<div class="bg" style="left:113px;top:246.5px;width:291px;height:798.5px;background:#ffffff;"></div>
<div class="bg" style="left:406.4px;top:246.5px;width:1.8px;height:800px;background:#c4c4c4;"></div>
<div class="a" style="left:115.0px;top:225.9px;font-size:15px;line-height:18px;color:#4a4a4a;font-weight:normal;transform:scaleX(0.7540);transform-origin:0 0;">プロジェクト ブラウザ - ファミリ1</div>
<svg style="left:387px;top:228px" width="13" height="12" viewBox="0 0 13 12"><path d="M1 1l11 10M12 1L1 11" stroke="#111" stroke-width="2"/></svg>
<svg style="left:0;top:0" width="1920" height="1080" viewBox="0 0 1920 1080"><g stroke="#e4e4e4" stroke-width="1" fill="none"><path d="M123 264v176h16M149 269v81M149 281h18M149 304h18M149 327h18M149 350h18M123 372h16M129 395h10M129 417h10M129 258h9"/></g></svg>
<div class="bg" style="left:161px;top:247.5px;width:83px;height:22px;background:#e3e3e3;"></div>
<svg style="left:117px;top:252.5px" width="12" height="12" viewBox="0 0 12 12"><rect x="0.5" y="0.5" width="11" height="11" fill="#f0f0f0" stroke="#c8c8c8"/><path d="M3 6h6" stroke="#2a3a80" stroke-width="1.6"/></svg>
<svg style="left:143.5px;top:275.3px" width="12" height="12" viewBox="0 0 12 12"><rect x="0.5" y="0.5" width="11" height="11" fill="#f0f0f0" stroke="#c8c8c8"/><path d="M3 6h6" stroke="#2a3a80" stroke-width="1.6"/><path d="M6 3v6" stroke="#2a3a80" stroke-width="1.6"/></svg>
<svg style="left:143.5px;top:298px" width="12" height="12" viewBox="0 0 12 12"><rect x="0.5" y="0.5" width="11" height="11" fill="#f0f0f0" stroke="#c8c8c8"/><path d="M3 6h6" stroke="#2a3a80" stroke-width="1.6"/><path d="M6 3v6" stroke="#2a3a80" stroke-width="1.6"/></svg>
<svg style="left:143.5px;top:320.7px" width="12" height="12" viewBox="0 0 12 12"><rect x="0.5" y="0.5" width="11" height="11" fill="#f0f0f0" stroke="#c8c8c8"/><path d="M3 6h6" stroke="#2a3a80" stroke-width="1.6"/><path d="M6 3v6" stroke="#2a3a80" stroke-width="1.6"/></svg>
<svg style="left:143.5px;top:343.6px" width="12" height="12" viewBox="0 0 12 12"><rect x="0.5" y="0.5" width="11" height="11" fill="#f0f0f0" stroke="#c8c8c8"/><path d="M3 6h6" stroke="#2a3a80" stroke-width="1.6"/><path d="M6 3v6" stroke="#2a3a80" stroke-width="1.6"/></svg>
<svg style="left:117px;top:389px" width="12" height="12" viewBox="0 0 12 12"><rect x="0.5" y="0.5" width="11" height="11" fill="#f0f0f0" stroke="#c8c8c8"/><path d="M3 6h6" stroke="#2a3a80" stroke-width="1.6"/><path d="M6 3v6" stroke="#2a3a80" stroke-width="1.6"/></svg>
<svg style="left:117px;top:411.7px" width="12" height="12" viewBox="0 0 12 12"><rect x="0.5" y="0.5" width="11" height="11" fill="#f0f0f0" stroke="#c8c8c8"/><path d="M3 6h6" stroke="#2a3a80" stroke-width="1.6"/><path d="M6 3v6" stroke="#2a3a80" stroke-width="1.6"/></svg>
<svg style="left:139px;top:248px" width="21" height="21" viewBox="0 0 21 21"><path d="M1 6V1h5M15 1h5v5M20 15v5h-5M6 20H1v-5" fill="none" stroke="#333" stroke-width="2"/><rect x="6" y="6" width="9" height="9" rx="2" fill="#e6e6e6" stroke="#444" stroke-width="1.8"/></svg>
<svg style="left:139px;top:362px" width="21" height="18" viewBox="0 0 21 18"><path d="M1 1h14l5 5v11H1z" fill="#ececec" stroke="#555" stroke-width="1.8"/><path d="M4 5h7v4H8v5H4z" fill="none" stroke="#888" stroke-width="1.3"/><path d="M15 1v5h5" fill="#fff" stroke="#555" stroke-width="1.2"/></svg>
<svg style="left:139.5px;top:385px" width="20" height="19" viewBox="0 0 20 19"><rect x="1" y="1" width="8" height="8" fill="#e6e6e6" stroke="#555" stroke-width="1.8"/><path d="M12 1h6v17H1v-6h11z" fill="#ececec" stroke="#555" stroke-width="1.8"/></svg>
<svg style="left:139.5px;top:407px" width="20" height="20" viewBox="0 0 20 20"><path d="M4 1H1v18h3M16 1h3v18h-3" fill="none" stroke="#444" stroke-width="1.8"/><circle cx="8" cy="8" r="5" fill="#ddd" stroke="#666" stroke-width="1.5"/><rect x="7" y="8" width="9" height="9" rx="2" fill="#d0d0d0" stroke="#666" stroke-width="1.5"/></svg>
<svg style="left:138.5px;top:435px" width="21" height="10" viewBox="0 0 21 10"><rect x="0.8" y="0.8" width="10" height="8.4" rx="4.2" fill="#e8b830" stroke="#a07810" stroke-width="1.3"/><rect x="10" y="0.8" width="10" height="8.4" rx="4.2" fill="#e8b830" stroke="#a07810" stroke-width="1.3"/><path d="M5 5h11" stroke="#7a5a10" stroke-width="1.2"/></svg>
<div class="a" style="left:161.2px;top:249.5px;font-size:15px;line-height:18px;color:#3a3a3a;font-weight:normal;transform:scaleX(0.7832);transform-origin:0 0;">ビュー (すべて)</div>
<div class="a" style="left:168.7px;top:272.6px;font-size:15px;line-height:18px;color:#3a3a3a;font-weight:normal;transform:scaleX(1.0205);transform-origin:0 0;">平面図</div>
<div class="a" style="left:167.7px;top:295.4px;font-size:15px;line-height:18px;color:#3a3a3a;font-weight:normal;transform:scaleX(1.0276);transform-origin:0 0;">天井伏図</div>
<div class="a" style="left:168.7px;top:317.6px;font-size:15px;line-height:18px;color:#3a3a3a;font-weight:normal;transform:scaleX(0.7940);transform-origin:0 0;">3D ビュー</div>
<div class="a" style="left:168.7px;top:340.8px;font-size:15px;line-height:18px;color:#3a3a3a;font-weight:normal;transform:scaleX(1.0060);transform-origin:0 0;">立面図 (立面図 1)</div>
<div class="a" style="left:161.9px;top:362.4px;font-size:15px;line-height:18px;color:#3a3a3a;font-weight:normal;transform:scaleX(0.7882);transform-origin:0 0;">シート (すべて)</div>
<div class="a" style="left:162.8px;top:385.2px;font-size:15px;line-height:18px;color:#3a3a3a;font-weight:normal;transform:scaleX(0.7073);transform-origin:0 0;">ファミリ</div>
<div class="a" style="left:162.0px;top:408.2px;font-size:15px;line-height:18px;color:#3a3a3a;font-weight:normal;transform:scaleX(0.7475);transform-origin:0 0;">グループ</div>
<div class="a" style="left:162.6px;top:430.5px;font-size:15px;line-height:18px;color:#3a3a3a;font-weight:normal;transform:scaleX(0.8688);transform-origin:0 0;">Revit リンク</div>
<div class="bg" style="left:408.2px;top:222px;width:1080px;height:25.5px;background:#c8c8c8;"></div>
<div class="bg" style="left:408.7px;top:247.5px;width:1079px;height:776px;background:#ffffff;"></div>
<div class="bg" style="left:898.7px;top:222px;width:163.3px;height:25px;background:#ffffff;"></div>
<svg style="left:414.5px;top:225.5px" width="21" height="18" viewBox="0 0 21 18"><rect x="1" y="1" width="11" height="15" fill="#e9e9e9" stroke="#8a8a8a" stroke-width="1.4"/><rect x="7" y="6" width="12" height="11" fill="#e2e2e2" stroke="#8a8a8a" stroke-width="1.4"/><path d="M9 6v-1M13 6V4" stroke="#8a8a8a" stroke-width="1" stroke-dasharray="1 1"/></svg>
<div class="a" style="left:444.4px;top:225.5px;font-size:15px;line-height:18px;color:#5a5a5a;font-weight:normal;transform:scaleX(0.8523);transform-origin:0 0;">配置図ビュー</div>
<svg style="left:579px;top:225.5px" width="20" height="19" viewBox="0 0 20 19"><path d="M1.5 9L7 3h7l5 5v7l-7 3-10.5-3z" fill="#e6e6e6" stroke="#8a8a8a" stroke-width="1.5" stroke-linejoin="round"/><path d="M1.5 9L7 3l5 6v9M12 9l7-1" fill="none" stroke="#8a8a8a" stroke-width="1.3"/><path d="M12 9L7 3h7l5 5z" fill="#f4f4f4" stroke="#8a8a8a" stroke-width="1.2"/><rect x="4.5" y="11" width="3" height="6" fill="#9a9a9a"/></svg>
<div class="a" style="left:605.5px;top:225.5px;font-size:15px;line-height:18px;color:#5a5a5a;font-weight:normal;transform:scaleX(0.7630);transform-origin:0 0;">ビュー 1</div>
<svg style="left:741px;top:225.5px" width="21" height="18" viewBox="0 0 21 18"><rect x="1" y="1" width="11" height="15" fill="#e9e9e9" stroke="#8a8a8a" stroke-width="1.4"/><rect x="7" y="6" width="12" height="11" fill="#e2e2e2" stroke="#8a8a8a" stroke-width="1.4"/><path d="M9 6v-1M13 6V4" stroke="#8a8a8a" stroke-width="1" stroke-dasharray="1 1"/></svg>
<div class="a" style="left:771.5px;top:225.0px;font-size:15px;line-height:18px;color:#5a5a5a;font-weight:normal;transform:scaleX(0.8907);transform-origin:0 0;">参照レベル</div>
<svg style="left:904px;top:225.5px" width="21" height="18" viewBox="0 0 21 18"><rect x="1" y="1" width="11" height="15" fill="#e9e9e9" stroke="#666" stroke-width="1.4"/><rect x="7" y="6" width="12" height="11" fill="#e2e2e2" stroke="#666" stroke-width="1.4"/><path d="M9 6v-1M13 6V4" stroke="#666" stroke-width="1" stroke-dasharray="1 1"/></svg>
<div class="a" style="left:935.5px;top:225.5px;font-size:15px;line-height:18px;color:#2a2a2a;font-weight:normal;transform:scaleX(0.8907);transform-origin:0 0;">基準レベル</div>
<svg style="left:1042px;top:228.5px" width="14" height="12" viewBox="0 0 14 12"><path d="M1 1l12 10M13 1L1 11" stroke="#111" stroke-width="2.2"/></svg>
<svg style="left:1068px;top:225.5px" width="20" height="19" viewBox="0 0 20 19"><path d="M1.5 9L7 3h7l5 5v7l-7 3-10.5-3z" fill="#e6e6e6" stroke="#8a8a8a" stroke-width="1.5" stroke-linejoin="round"/><path d="M1.5 9L7 3l5 6v9M12 9l7-1" fill="none" stroke="#8a8a8a" stroke-width="1.3"/><path d="M12 9L7 3h7l5 5z" fill="#f4f4f4" stroke="#8a8a8a" stroke-width="1.2"/><rect x="4.5" y="11" width="3" height="6" fill="#9a9a9a"/></svg>
<div class="a" style="left:1098.4px;top:224.5px;font-size:15px;line-height:18px;color:#5a5a5a;font-weight:normal;transform:scaleX(0.9310);transform-origin:0 0;">{3D}</div>
<svg style="left:1468px;top:229px" width="13" height="11" viewBox="0 0 13 11"><path d="M1 1h11" stroke="#333" stroke-width="1.6"/><path d="M1 4h11L6.5 10z" fill="#333"/></svg>
<div class="bg" style="left:1464px;top:246.5px;width:24px;height:777px;background:#efefef;"></div>
<div class="bg" style="left:1464px;top:625px;width:20px;height:22px;background:#cdcdcd;"></div>
<svg style="left:1470.5px;top:258px" width="9" height="6" viewBox="0 0 9 6"><path d="M1 5l3.5-3.5L8 5" fill="none" stroke="#333" stroke-width="1.5"/></svg>
<svg style="left:1470.5px;top:1009px" width="9" height="6" viewBox="0 0 9 6"><path d="M1 1l3.5 3.5L8 1" fill="none" stroke="#333" stroke-width="1.5"/></svg>
<div class="bg" style="left:1486.5px;top:222px;width:2.5px;height:825px;background:#c9c9c9;"></div>
<div class="bg" style="left:1427.8px;top:250.4px;width:35px;height:121.8px;background:#f3f3f3;border:1px solid #cdcdcd;border-radius:3px"></div>
<div class="bg" style="left:1430px;top:311px;width:31px;height:1px;background:#dedede;"></div>
<svg style="left:1430px;top:252px" width="32" height="118" viewBox="0 0 32 118"><circle cx="26" cy="5" r="3.6" fill="#e4e4e4" stroke="#b8b8b8" stroke-width="1.2"/><path d="M24.5 3.5l3 3M27.5 3.5l-3 3" stroke="#aaa" stroke-width="0.8"/>
<path d="M9 20a8 8 0 1 0 9 9v-8a3 3 0 0 0-3-3z" fill="#f0f0f0" stroke="#9a9a9a" stroke-width="1.3"/><circle cx="12" cy="26" r="3.5" fill="#e8e8e8" stroke="#aaa" stroke-width="1"/>
<text x="16" y="40" font-size="9" font-weight="bold" fill="#5b8fd0" font-family="Liberation Sans">2D</text>
<path d="M13 49h4l-2 2z" fill="#555"/>
<rect x="7" y="69" width="12" height="12" fill="#9ec38a"/><circle cx="20" cy="83" r="4" fill="#f4f4f4" stroke="#777" stroke-width="1.3"/><path d="M23 86l3 3" stroke="#777" stroke-width="1.5"/>
<path d="M13 99h4l-2 2z" fill="#555"/>
<circle cx="26" cy="113" r="3.6" fill="#e4e4e4" stroke="#b8b8b8" stroke-width="1.2"/></svg>
<div class="bg" style="left:408.7px;top:1023px;width:1055.3px;height:22.5px;background:#eeeeee;"></div>
<div class="bg" style="left:1075px;top:1023.5px;width:20.5px;height:21.5px;background:#c8c8c8;"></div>
<div class="a" style="left:446.8px;top:1025.7px;font-size:14px;line-height:17px;color:#333;font-weight:normal;transform:scaleX(1.0353);transform-origin:0 0;">1 : 20</div>
<svg style="left:1448px;top:1029px" width="6" height="10" viewBox="0 0 6 10"><path d="M1 1l4 4-4 4" fill="none" stroke="#333" stroke-width="1.4"/></svg>
<svg style="left:714px;top:1029px" width="6" height="10" viewBox="0 0 6 10"><path d="M5 1L1 5l4 4" fill="none" stroke="#333" stroke-width="1.4"/></svg>
<svg style="left:1472px;top:1032px" width="10" height="10" viewBox="0 0 10 10"><g fill="#aaa"><rect x="7" y="1" width="2" height="2"/><rect x="4" y="4" width="2" height="2"/><rect x="7" y="4" width="2" height="2"/><rect x="1" y="7" width="2" height="2"/><rect x="4" y="7" width="2" height="2"/><rect x="7" y="7" width="2" height="2"/></g></svg>
<svg style="left:0;top:0" width="1920" height="1080" viewBox="0 0 1920 1080">
<rect x="517.5" y="1024.5" width="20" height="16" fill="url(#gr)" stroke="#444" stroke-width="1.3"/>
<g fill="#f4f4f4" stroke="#444" stroke-width="1.3"><path d="M545 1030l5-5h14v11l-5 5h-14z"/><path d="M545 1030h14v11M559 1030l5-5"/></g>
<g><path d="M573 1030h10v10h-10z" fill="#6a9ad8" stroke="#224a90" stroke-width="1.2"/><path d="M571 1034h4M585 1026h-4v4" stroke="#224a90" stroke-width="1.2" fill="none"/><path d="M582 1033l7 7M589 1033l-7 7" stroke="#d02a1a" stroke-width="2.2"/></g>
<g><path d="M600 1030h10v10h-10z" fill="#6a9ad8" stroke="#224a90" stroke-width="1.2"/><circle cx="612" cy="1035" r="4" fill="#bcd8f4" stroke="#224a90" stroke-width="1.2"/><path d="M598 1034h4" stroke="#224a90" stroke-width="1.2"/></g>
<path d="M626 1030c4 0 6 6 10 6s4-6 8-6c-2 4-4 8-8 8s-6-6-10-8z" fill="none" stroke="#444" stroke-width="1.3"/><circle cx="639" cy="1033" r="3" fill="none" stroke="#5b8fd0" stroke-width="1.2"/>
<g fill="none" stroke="#444" stroke-width="1.3"><path d="M653 1025v16M653 1027h19v14"/><rect x="663" y="1033" width="7" height="7" fill="#555"/></g>
<g><rect x="682" y="1025" width="19" height="15" fill="#f0f0f0" stroke="#555" stroke-width="1.3"/><path d="M684 1033h10M684 1036h10" stroke="#777" stroke-width="1.3"/><rect x="694" y="1028" width="6" height="7" fill="#9ac4ee" stroke="#2a6ac0" stroke-width="1"/></g>
</svg>
<svg style="left:0;top:0" width="1920" height="1080" viewBox="0 0 1920 1080"><defs><clipPath id="vclip"><rect x="408.7" y="246.5" width="1055.3" height="776.5"/></clipPath>
<pattern id="hatch" patternUnits="userSpaceOnUse" x="441.5" y="587.7" width="36.7" height="36.7">
<path d="M-5 -5L41.7 41.7M41.7 -5L-5 41.7" stroke="#737373" stroke-width="1.7"/></pattern></defs><g clip-path="url(#vclip)"><rect x="411" y="558" width="367.5" height="60" fill="url(#hatch)"/><rect x="986" y="558" width="416" height="60" fill="url(#hatch)"/><rect x="503" y="559.5" width="34.5" height="57" fill="#fff"/><rect x="1329" y="548" width="33" height="19" fill="#fff"/><rect x="1329" y="608" width="33" height="19" fill="#fff"/><path d="M778.5 292v126" stroke="#8c8c8c" stroke-width="1.2"/><path d="M882 292v126" stroke="#8c8c8c" stroke-width="1.2"/><path d="M985.6 292v126" stroke="#8c8c8c" stroke-width="1.2"/><path d="M776 301.5h212" stroke="#8c8c8c" stroke-width="1.3"/><path d="M773.0 307.5l11-10.5" stroke="#111" stroke-width="2.2"/><path d="M876.5 307.5l11-10.5" stroke="#111" stroke-width="2.2"/><path d="M980.1 307.5l11-10.5" stroke="#111" stroke-width="2.2"/><path d="M778.5 429v37" stroke="#2d7a2d" stroke-width="1.6"/><path d="M778.5 501v37" stroke="#2d7a2d" stroke-width="1.6"/><path d="M778.5 573v37" stroke="#2d7a2d" stroke-width="1.6"/><path d="M778.5 645v37" stroke="#2d7a2d" stroke-width="1.6"/><path d="M778.5 717v37" stroke="#2d7a2d" stroke-width="1.6"/><path d="M778.5 789v37" stroke="#2d7a2d" stroke-width="1.6"/><path d="M882.2 429v37" stroke="#2d7a2d" stroke-width="1.6"/><path d="M882.2 501v37" stroke="#2d7a2d" stroke-width="1.6"/><path d="M882.2 573v37" stroke="#2d7a2d" stroke-width="1.6"/><path d="M882.2 645v37" stroke="#2d7a2d" stroke-width="1.6"/><path d="M882.2 717v37" stroke="#2d7a2d" stroke-width="1.6"/><path d="M882.2 789v37" stroke="#2d7a2d" stroke-width="1.6"/><path d="M986 429v37" stroke="#2d7a2d" stroke-width="1.6"/><path d="M986 501v37" stroke="#2d7a2d" stroke-width="1.6"/><path d="M986 573v37" stroke="#2d7a2d" stroke-width="1.6"/><path d="M986 645v37" stroke="#2d7a2d" stroke-width="1.6"/><path d="M986 717v37" stroke="#2d7a2d" stroke-width="1.6"/><path d="M986 789v37" stroke="#2d7a2d" stroke-width="1.6"/><path d="M411 558h916.5M1362.5 558H1402M411 618h916.5M1362.5 618H1402" stroke="#111" stroke-width="3"/><path d="M1402 556.5v63" stroke="#111" stroke-width="3"/><path d="M778.5 557v62M986 557v62" stroke="#111" stroke-width="2.6"/><path d="M396 559.6H1327.5" stroke="#3a8a3a" stroke-width="1" stroke-dasharray="36 35.8" transform="translate(36,0)"/><path d="M396 618H1327.5" stroke="#0a3a0a" stroke-width="2.6" stroke-dasharray="36 35.8" transform="translate(36,0)"/><path d="M395.1 587.7H1363" stroke="#2d7a2d" stroke-width="1.6" stroke-dasharray="36 35.8"/><path d="M1402 587.7h47" stroke="#2d7a2d" stroke-width="1.6"/><path d="M546.7 551v73" stroke="#222" stroke-width="1"/><path d="M540.5 552.5l12 11M540.5 612.5l12 11" stroke="#111" stroke-width="2.2"/><text x="0" y="0" transform="translate(531.6 611.6) rotate(-90) scale(0.97 1.05)" font-size="30" fill="#111" font-family="Liberation Sans">230</text><text transform="translate(1354.5 565) rotate(-90)" font-size="27" fill="#111" font-family="Liberation Sans">0</text><text transform="translate(1354.5 625.5) rotate(-90)" font-size="27" fill="#111" font-family="Liberation Sans">0</text><path d="M1366 552.5l11 11M1366 612.5l11 11" stroke="#111" stroke-width="2.2"/><path d="M778.5 836.7v90" stroke="#8c8c8c" stroke-width="1.2"/><path d="M985.6 836.7v90" stroke="#8c8c8c" stroke-width="1.2"/><path d="M776 916.7h212" stroke="#8c8c8c" stroke-width="1.3"/><path d="M773.0 922.5l11-10.5" stroke="#111" stroke-width="2.2"/><path d="M980.1 922.5l11-10.5" stroke="#111" stroke-width="2.2"/><path d="M933.5 457v18M937 457v18M930 460l5-4 4 4M930 472l5 4 4-4" fill="none" stroke="#8c9be8" stroke-width="1"/></g></svg>
<div class="a" style="left:831.2px;top:878.7px;font-size:27px;line-height:32px;color:#111;font-weight:normal;transform:scaleX(0.9880);transform-origin:0 0;">幅</div>
<div class="a" style="left:867.7px;top:878.9px;font-size:28px;line-height:34px;color:#111;font-weight:normal;">=</div>
<div class="a" style="left:892.5px;top:878.2px;font-size:28px;line-height:34px;color:#111;font-weight:normal;transform:scaleX(0.9911);transform-origin:0 0;">800</div>
<div class="a" style="left:809.8px;top:258.0px;font-size:27px;line-height:32px;color:#111;font-weight:normal;transform:scaleX(1.0514);transform-origin:0 0;">EQ</div>
<div class="a" style="left:913.5px;top:258.0px;font-size:27px;line-height:32px;color:#111;font-weight:normal;transform:scaleX(1.0528);transform-origin:0 0;">EQ</div>
<div class="a" style="left:418.3px;top:257.0px;font-size:42px;line-height:50px;color:#111;font-weight:normal;transform:scaleX(1.0600);transform-origin:0 0;">部</div>
<div class="a" style="left:413.7px;top:814.0px;font-size:42px;line-height:50px;color:#111;font-weight:normal;transform:scaleX(1.0220);transform-origin:0 0;">壁</div>
<svg style="left:410px;top:277px" width="5" height="5" viewBox="0 0 5 5"><path d="M1 1l3 3" stroke="#111" stroke-width="2"/></svg>
<div class="bg" style="left:1489px;top:222px;width:320px;height:25px;background:#eeeeee;"></div>
<div class="a" style="left:1494.8px;top:226.2px;font-size:15px;line-height:18px;color:#4a4a4a;font-weight:normal;transform:scaleX(0.7662);transform-origin:0 0;">プロパティ</div>
<svg style="left:1792px;top:228.5px" width="13" height="12" viewBox="0 0 13 12"><path d="M1 1l11 10M12 1L1 11" stroke="#111" stroke-width="2"/></svg>
<div class="bg" style="left:1492px;top:246.5px;width:316.5px;height:1.5px;background:#5a5a5a;"></div>
<div class="bg" style="left:1492px;top:248px;width:316.5px;height:91px;background:linear-gradient(180deg,#f7f7f7,#e9e9e9);"></div>
<div class="bg" style="left:1492px;top:338.5px;width:316.5px;height:1.5px;background:#7a7a7a;"></div>
<div class="bg" style="left:1496.6px;top:251.6px;width:83.4px;height:83.4px;background:linear-gradient(180deg,#f1f1f1,#e4e4e4);border:1px solid #dedede"></div>
<svg style="left:0;top:0" width="1920" height="400" viewBox="0 0 1920 400"><rect x="1500" y="257" width="20" height="44" fill="#e2e2e2"/><path d="M1525 260h15c11 0 17 7 17 16 0 8-5 13-11 15l18 23h-14l-15-21h-2v21h-8z M1533 269v12h5c4 0 6-2.5 6-6s-2-6-6-6z" fill="#909090" fill-rule="evenodd"/><path d="M1520 262l5-2v54l-5 1z" fill="#727272"/><path d="M1533 293l3 0 14 21h-4z" fill="#9a9a9a"/></svg>
<svg style="left:1795px;top:291px" width="12" height="6" viewBox="0 0 12 6"><path d="M0 0h12L6 6z" fill="#8a8a8a"/></svg>
<div class="bg" style="left:1492px;top:340px;width:230.5px;height:26px;background:#dcdcdc;"></div>
<div class="bg" style="left:1722.5px;top:340px;width:86px;height:26px;background:#efefef;"></div>
<div class="a" style="left:1494.8px;top:346.2px;font-size:15px;line-height:18px;color:#333;font-weight:normal;transform:scaleX(0.7642);transform-origin:0 0;">ファミリ: 窓</div>
<svg style="left:1708px;top:351px" width="10" height="6" viewBox="0 0 10 6"><path d="M1 1l4 4 4-4" fill="none" stroke="#555" stroke-width="1.3"/></svg>
<svg style="left:1726px;top:347px" width="10" height="12" viewBox="0 0 10 12"><g fill="none" stroke="#bbb" stroke-width="1"><rect x="0.5" y="0.5" width="9" height="5"/><rect x="0.5" y="5.5" width="9" height="5"/><path d="M5 0v11"/></g></svg>
<div class="a" style="left:1736.2px;top:346.2px;font-size:15px;line-height:18px;color:#a9a9a9;font-weight:normal;transform:scaleX(0.8904);transform-origin:0 0;">タイプ編集</div>
<div class="bg" style="left:1492px;top:366px;width:316px;height:650px;background:#ffffff;"></div>
<div class="bg" style="left:1492px;top:366.5px;width:316px;height:25.5px;background:#d6d6d6;"></div>
<div class="a" style="left:1494.5px;top:371.0px;font-size:15px;line-height:18px;color:#333;font-weight:normal;transform:scaleX(0.9828);transform-origin:0 0;">拘束</div>
<svg style="left:1800px;top:369.5px" width="5" height="8" viewBox="0 0 5 8"><path d="M1 3l1.5-2L4 3M1 5l1.5 2L4 5" fill="none" stroke="#666" stroke-width="0.9"/></svg>
<div class="bg" style="left:1492px;top:416.3px;width:316px;height:1px;background:#e6e6e6;"></div>
<div class="a" style="left:1502.2px;top:394.3px;font-size:15px;line-height:18px;color:#444;font-weight:normal;transform:scaleX(0.8048);transform-origin:0 0;">ホスト</div>
<div class="a" style="left:1652.6px;top:395.3px;font-size:15px;line-height:18px;color:#a5a5a5;font-weight:normal;transform:scaleX(0.9600);transform-origin:0 0;">壁</div>
<div class="bg" style="left:1492px;top:416.3px;width:316px;height:25.5px;background:#d6d6d6;"></div>
<div class="a" style="left:1494.5px;top:420.8px;font-size:15px;line-height:18px;color:#333;font-weight:normal;transform:scaleX(1.0254);transform-origin:0 0;">識別情報</div>
<svg style="left:1800px;top:419.3px" width="5" height="8" viewBox="0 0 5 8"><path d="M1 3l1.5-2L4 3M1 5l1.5 2L4 5" fill="none" stroke="#666" stroke-width="0.9"/></svg>
<div class="bg" style="left:1492px;top:466.1px;width:316px;height:1px;background:#e6e6e6;"></div>
<div class="a" style="left:1502.2px;top:445.1px;font-size:15px;line-height:18px;color:#333;font-weight:normal;transform:scaleX(0.9611);transform-origin:0 0;">OmniClass 番号</div>
<div class="bg" style="left:1651px;top:442px;width:157px;height:24.5px;background:#ffffff;border:1px solid #6a6a6a"></div>
<div class="a" style="left:1653.0px;top:444.7px;font-size:15px;line-height:18px;color:#222;font-weight:normal;transform:scaleX(0.9747);transform-origin:0 0;">23.30.20.00</div>
<div class="bg" style="left:1492px;top:491.1px;width:316px;height:1px;background:#e6e6e6;"></div>
<div class="a" style="left:1502.2px;top:469.1px;font-size:15px;line-height:18px;color:#999;font-weight:normal;transform:scaleX(0.8681);transform-origin:0 0;">OmniClass タイトル</div>
<div class="a" style="left:1652.0px;top:470.1px;font-size:15px;line-height:18px;color:#999;font-weight:normal;transform:scaleX(1.0328);transform-origin:0 0;">Windows</div>
<div class="bg" style="left:1492px;top:491.6px;width:316px;height:25.5px;background:#d6d6d6;"></div>
<div class="a" style="left:1493.6px;top:495.6px;font-size:15px;line-height:18px;color:#333;font-weight:normal;transform:scaleX(0.8523);transform-origin:0 0;">その他</div>
<svg style="left:1800px;top:494.6px" width="5" height="8" viewBox="0 0 5 8"><path d="M1 3l1.5-2L4 3M1 5l1.5 2L4 5" fill="none" stroke="#666" stroke-width="0.9"/></svg>
<div class="bg" style="left:1492px;top:541.0px;width:316px;height:1px;background:#e6e6e6;"></div>
<div class="a" style="left:1502.2px;top:520.0px;font-size:15px;line-height:18px;color:#444;font-weight:normal;transform:scaleX(0.9300);transform-origin:0 0;">常に垂直</div>
<svg style="left:1653px;top:519.5px" width="17" height="16" viewBox="0 0 17 16"><rect x="0.75" y="0.75" width="15.5" height="14.5" fill="#fff" stroke="#333" stroke-width="1.5"/><path d="M4 8l3 3 6-7" fill="none" stroke="#444" stroke-width="1.3"/></svg>
<div class="bg" style="left:1492px;top:566.0px;width:316px;height:1px;background:#e6e6e6;"></div>
<div class="a" style="left:1499.7px;top:544.5px;font-size:15px;line-height:18px;color:#444;font-weight:normal;transform:scaleX(0.8197);transform-origin:0 0;">ロード時にボイドで切り...</div>
<svg style="left:1653px;top:544.5px" width="17" height="16" viewBox="0 0 17 16"><rect x="0.75" y="0.75" width="15.5" height="14.5" fill="#fff" stroke="#333" stroke-width="1.5"/></svg>
<div class="bg" style="left:1492px;top:591.0px;width:316px;height:1px;background:#e6e6e6;"></div>
<div class="a" style="left:1502.2px;top:569.5px;font-size:15px;line-height:18px;color:#444;font-weight:normal;transform:scaleX(0.9600);transform-origin:0 0;">共有</div>
<svg style="left:1653px;top:569.5px" width="17" height="16" viewBox="0 0 17 16"><rect x="0.75" y="0.75" width="15.5" height="14.5" fill="#fff" stroke="#333" stroke-width="1.5"/></svg>
<div class="bg" style="left:1492px;top:616.0px;width:316px;height:1px;background:#e6e6e6;"></div>
<div class="a" style="left:1502.2px;top:595.0px;font-size:15px;line-height:18px;color:#444;font-weight:normal;transform:scaleX(0.9043);transform-origin:0 0;">部屋計算ポイント</div>
<svg style="left:1653px;top:594.5px" width="17" height="16" viewBox="0 0 17 16"><rect x="0.75" y="0.75" width="15.5" height="14.5" fill="#fff" stroke="#333" stroke-width="1.5"/></svg>
<div class="bg" style="left:1650.3px;top:391.8px;width:1px;height:25px;background:#e6e6e6;"></div>
<div class="bg" style="left:1650.3px;top:441.6px;width:1px;height:50px;background:#e6e6e6;"></div>
<div class="bg" style="left:1650.3px;top:516.5px;width:1px;height:100px;background:#e6e6e6;"></div>
<div class="a" style="left:1493.2px;top:1020.0px;font-size:15px;line-height:18px;color:#3466b6;font-weight:normal;transform:scaleX(0.7726);transform-origin:0 0;">プロパティ ヘルプ</div>
<div class="bg" style="left:1494px;top:1035.5px;width:95.8px;height:1px;background:#5a8ad0;"></div>
<div class="bg" style="left:1709.6px;top:1018px;width:97px;height:25px;background:#cfcfcf;"></div>
<div class="a" style="left:1743.0px;top:1022.5px;font-size:15px;line-height:18px;color:#9a9a9a;font-weight:normal;">適用</div>
<div class="a" style="left:113.0px;top:1056.1px;font-size:15px;line-height:18px;color:#333;font-weight:normal;">文字注記 : 文字 : 6mm</div>
<svg style="left:0;top:0" width="1920" height="1080" viewBox="0 0 1920 1080">
<g><rect x="1580" y="1057" width="19" height="8" rx="4" fill="#e8b830" stroke="#a07810"/><path d="M1588 1062v13l3-3 2 5 2-1-2-5h4z" fill="#fff" stroke="#222" stroke-width="1"/></g>
<g><path d="M1607 1070l12-10M1607 1073h14M1609 1066h10" stroke="#2a6ac0" stroke-width="1.6" fill="none"/><path d="M1620 1056l6 6M1626 1056l-6 6" stroke="#d62a1a" stroke-width="2"/><path d="M1621 1064v12l3-3 2 4 2-1-2-4h4z" fill="#fff" stroke="#222" stroke-width="1"/></g>
<g><rect x="1636" y="1056" width="10" height="5" fill="#f08a30" stroke="#a05010"/><rect x="1634" y="1063" width="14" height="4" fill="#f08a30" stroke="#a05010"/><path d="M1641 1067v9" stroke="#555" stroke-width="1.5"/><path d="M1648 1064v12l3-3 2 4 2-1-2-4h4z" fill="#fff" stroke="#222" stroke-width="1"/></g>
<g><path d="M1663 1060l8-3v16l-8 3z" fill="#8dc3ee" stroke="#2e6fbe" stroke-width="1.4"/><path d="M1674 1056l6 6M1680 1056l-6 6" stroke="#d62a1a" stroke-width="2"/><path d="M1675 1064v12l3-3 2 4 2-1-2-4h4z" fill="#fff" stroke="#222" stroke-width="1"/></g>
<g><path d="M1690 1062h10M1695 1057v10M1690 1062l2-2M1690 1062l2 2M1700 1062l-2-2M1700 1062l-2 2M1695 1057l-2 2M1695 1057l2 2" stroke="#222" stroke-width="1.3" fill="none"/><path d="M1700 1064v12l3-3 2 4 2-1-2-4h4z" fill="#fff" stroke="#222" stroke-width="1"/></g>
<circle cx="1726" cy="1064" r="7" fill="none" stroke="#bdbdbd" stroke-width="2.5" stroke-dasharray="2 1.5"/>
<path d="M1743 1056h19l-7 9v9l-5 3v-12z" fill="#f4f4f4" stroke="#444" stroke-width="1.5" stroke-linejoin="round"/>
</svg>
<div class="a" style="left:1761.8px;top:1056.0px;font-size:15px;line-height:18px;color:#222;font-weight:normal;transform:scaleX(1.1818);transform-origin:0 0;">:0</div>
<svg style="left:0;top:0" width="1920" height="200" viewBox="0 0 1920 200"><circle cx="206" cy="54.5" r="2.6" fill="#e8503a"/><path d="M206.5 55v13l3-3 3 6 2-1-3-6h5z" fill="#fff" stroke="#333" stroke-width="0.9"/></svg>
<svg style="left:0;top:0" width="400" height="200" viewBox="0 0 400 200"><path d="M181.7 28.4H232.6A11 11 0 0 1 243.6 39.4V64.7A11 11 0 0 1 232.6 75.7H181.7A11 11 0 0 1 170.7 64.7V39.4A11 11 0 0 1 181.7 28.4ZM179.1 37.8V66.7H235.2V37.8Z" fill="#ff0000" fill-rule="evenodd"/><path d="M285.2 53.2H342.4A12 12 0 0 1 354.4 65.2V169A12 12 0 0 1 342.4 181H285.2A12 12 0 0 1 273.2 169V65.2A12 12 0 0 1 285.2 53.2ZM282.2 62.2V172H345.4V62.2Z" fill="#ff0000" fill-rule="evenodd"/></svg>
<div class="a" style="left:305.2px;top:327.0px;font-size:57px;line-height:68px;color:#ff0000;font-weight:normal;transform:scaleX(1.0202);transform-origin:0 0;-webkit-text-stroke:1.7px #ff0000">作成</div>
<svg style="left:0;top:0" width="1920" height="1080" viewBox="0 0 1920 1080"><path d="M427 361.8h50M465 350.5l13.5 11.3L465 373" fill="none" stroke="#ff0000" stroke-width="2.6"/></svg>
<div class="a" style="left:487.4px;top:327.0px;font-size:57px;line-height:68px;color:#ff0000;font-weight:normal;transform:scaleX(1.0405);transform-origin:0 0;-webkit-text-stroke:1.7px #ff0000">押し出し</div>
<div class="bg" style="left:1327px;top:0px;width:483px;height:58px;background:#404c98;"></div>
<div class="bg" style="left:1810px;top:0px;width:110px;height:58px;background:#4e58a0;"></div>
<svg style="left:0;top:0" width="1920" height="60" viewBox="0 0 1920 60" fill="#37428c">
<path d="M1362 11v8l-5-4z"/>
<g><rect x="1374" y="10" width="7" height="14" rx="2"/><rect x="1386" y="10" width="7" height="14" rx="2"/><rect x="1380" y="12" width="7" height="5"/></g>
<g><circle cx="1414" cy="12" r="5"/><path d="M1404 25c0-6 4-9 10-9s10 3 10 9z"/></g>
<path d="M1558 9h4l3 10h12l2-7" fill="none" stroke="#37428c" stroke-width="1.6"/>
<circle cx="1612" cy="14" r="7" fill="none" stroke="#37428c" stroke-width="1.6"/>
<g fill="none" stroke="#37428c" stroke-width="1.6"><rect x="1754" y="12" width="9" height="9"/><path d="M1757 12V9h9v9h-3"/><path d="M1787 10l11 11M1798 10l-11 11" stroke-width="2"/></g>
</svg>
<div class="a" style="left:1431.0px;top:8.5px;font-size:15px;line-height:18px;color:#37428c;font-weight:normal;transform:scaleX(1.0533);transform-origin:0 0;">futakamishi</div>
<div class="a" style="left:1506.7px;top:11.5px;font-size:28px;line-height:34px;color:#ffffff;font-weight:bold;transform:scaleX(1.0544);transform-origin:0 0;">窓台を作成します</div>
</body></html>
